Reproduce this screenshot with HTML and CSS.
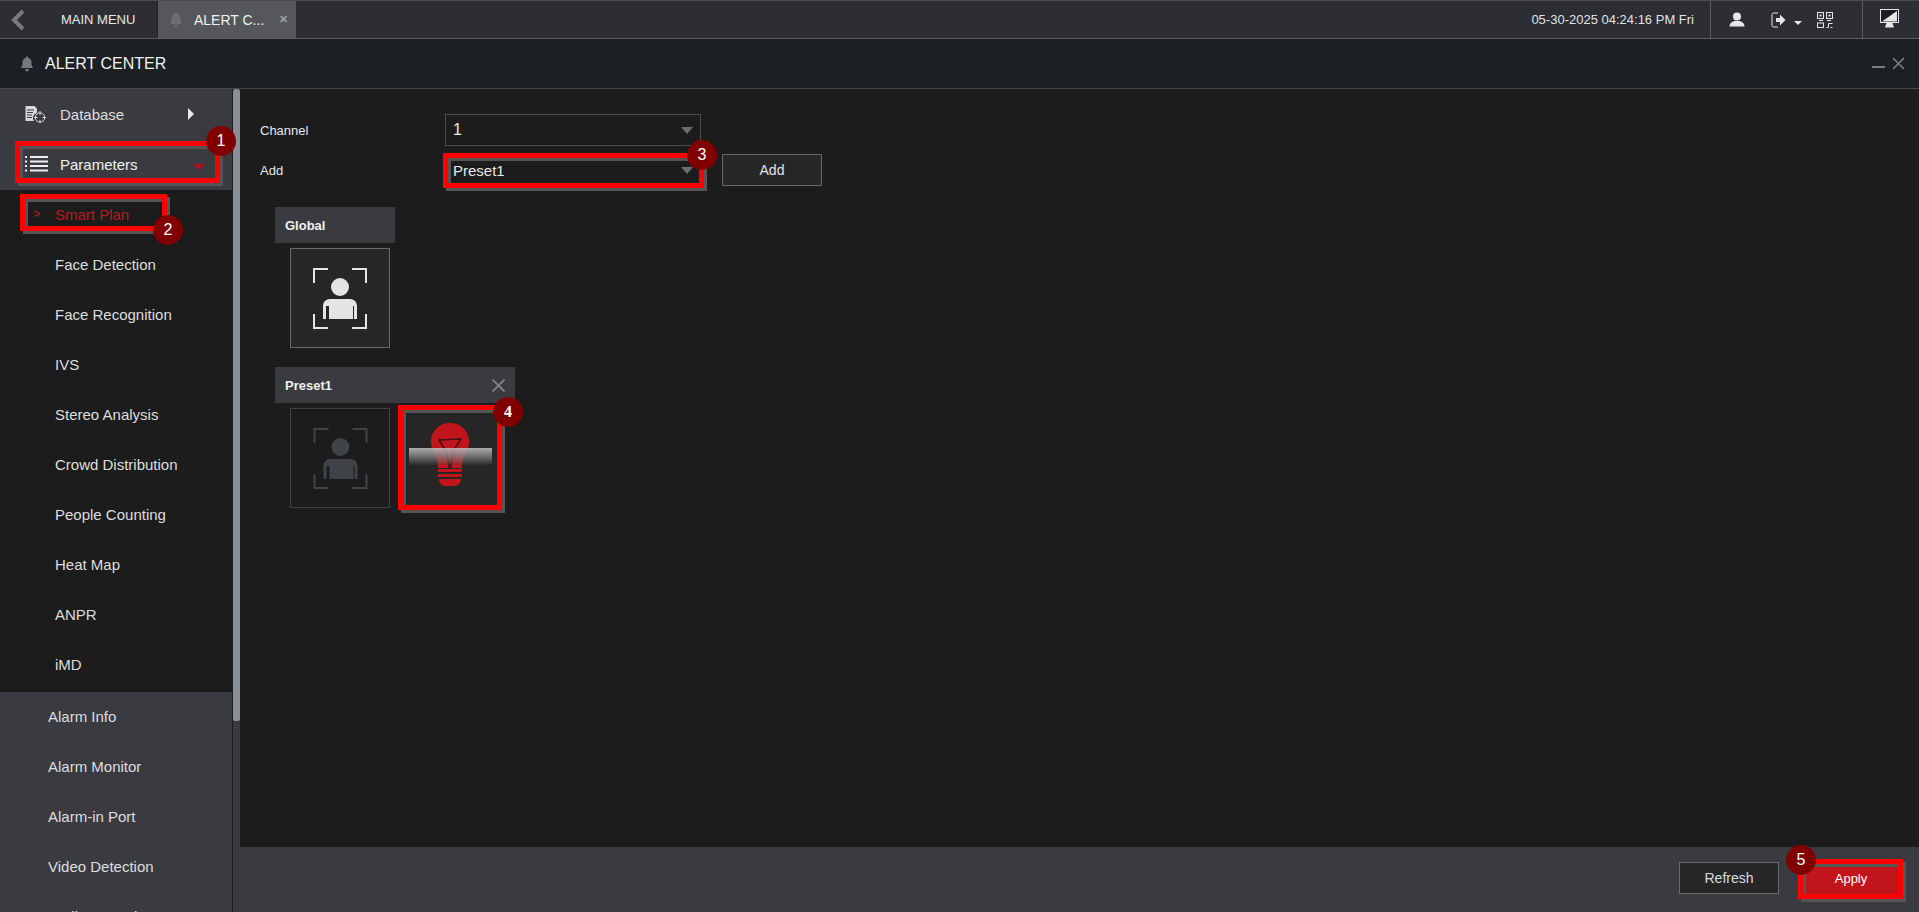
FILE: index.html
```html
<!DOCTYPE html>
<html lang="en">
<head>
<meta charset="utf-8">
<title>Alert Center</title>
<link rel="stylesheet" href="styles.css">
</head>
<body>
<div class="app">
  <header class="topbar">
    <div class="back"><svg width="16" height="24" viewBox="0 0 16 24"><path d="M13 3 L4 12 L13 21" fill="none" stroke="#77797d" stroke-width="4"/></svg></div>
    <div class="tab tab-main">MAIN MENU</div>
    <div class="tab tab-active">
      <svg class="bell-small" width="14" height="16" viewBox="0 0 14 16"><path d="M7 0.5c.8 0 1.2.5 1.2 1.2C10.500 2.300 11.500 4 11.500 6.500c0 2.500.5 4 1.700 5.500H.8C2 10.500 2.500 9 2.500 6.500 2.500 4 3.500 2.300 5.800 1.700 5.800 1 6.200.5 7 .5zM5 13h4c0 1.500-.8 2.500-2 2.500S5 14.500 5 13z" fill="#6b6d71"/></svg>
      <span class="tab-label">ALERT C...</span>
      <span class="tab-close">✕</span>
    </div>
    <div class="spring"></div>
    <div class="clock">05-30-2025 04:24:16 PM Fri</div>
    <div class="tool-group">
      <svg width="16" height="15" viewBox="0 0 16 15"><circle cx="8" cy="4.500" r="4" fill="#e6e6e6"/><path d="M0.500 14.500c0-3.500 3-5 5-5.500h5c2 .5 5 2 5 5.500z" fill="#e6e6e6"/></svg>
      <span class="logout">
        <svg width="15" height="16" viewBox="0 0 15 16"><path d="M7 1H2.500A1.500 1.500 0 0 0 1 2.500v11A1.500 1.500 0 0 0 2.500 15H7" fill="none" stroke="#e6e6e6" stroke-width="1"/><path d="M5 6h4V2.500L14.500 8 9 13.500V10H5z" fill="#e6e6e6"/></svg>
        <i class="caret-white"></i>
      </span>
      <svg width="16" height="16" viewBox="0 0 16 16"><g fill="none" stroke="#e6e6e6"><rect x=".5" y=".5" width="6" height="6"/><rect x="9.500" y=".5" width="6" height="6"/><rect x=".5" y="11" width="6" height="4.500"/><path d="M9.500 15.500h2v-4h4M13.500 15.500h2"/></g><rect x="2.500" y="2.500" width="2" height="2" fill="#e6e6e6"/><rect x="11.500" y="2.500" width="2" height="2" fill="#e6e6e6"/><path d="M2 8.500h4M10 8.500h4" stroke="#e6e6e6" fill="none"/></svg>
    </div>
    <div class="tool-end">
      <svg width="19" height="19" viewBox="0 0 19 19"><rect x=".5" y=".5" width="18" height="13" fill="#1c1e22" stroke="#e6e6e6"/><path d="M2 12.500 17 2v10.500z" fill="#e6e6e6"/><path d="M6.500 14h6l1.500 4.500H5z" fill="#e6e6e6"/></svg>
    </div>
  </header>

  <div class="titlebar">
    <svg class="bell" width="14" height="16" viewBox="0 0 14 16"><path d="M7 0.500c.8 0 1.200.5 1.200 1.200C10.500 2.300 11.500 4 11.500 6.500c0 2.500.5 4 1.700 5.500H.8C2 10.500 2.500 9 2.500 6.500 2.500 4 3.500 2.300 5.800 1.700 5.800 1 6.200.5 7 .5zM5 13h4c0 1.500-.8 2.500-2 2.500S5 14.500 5 13z" fill="#77797d"/></svg>
    <span class="title-text">ALERT CENTER</span>
    <div class="spring"></div>
    <i class="win-min"></i>
    <svg width="13" height="13" viewBox="0 0 13 13"><path d="M1 1l11 11M12 1 1 12" stroke="#7c7e82" stroke-width="1.600" fill="none"/></svg>
  </div>

  <div class="workspace">
    <aside class="sidebar">
      <nav class="menu">
        <div class="menu-head">
          <svg class="menu-icon" width="22" height="18" viewBox="0 0 22 18"><path d="M1.500 1h9l2.500 2.500V8a5 5 0 0 0-3 8H1.500z" fill="#d8d8d8"/><path d="M3 5h7M3 7.500h6M3 10h5M3 12.500h5" stroke="#3a3b40" stroke-width="1"/><circle cx="16" cy="12.500" r="4.700" fill="none" stroke="#d8d8d8"/><path d="M16 6v4M16 15v3M10 12.500h3.500M18.500 12.500H22" stroke="#d8d8d8"/></svg>
          <span class="menu-label">Database</span>
          <i class="arrow-right"></i>
        </div>
        <div class="menu-head menu-open">
          <svg class="menu-icon" width="24" height="18" viewBox="0 0 24 18"><path d="M1 2h2M1 6.500h2M1 11h2M1 15.500h2" stroke="#eee" stroke-width="2" stroke-dasharray="2 0"/><path d="M6 2h18M6 6.500h18M6 11h18M6 15.500h18" stroke="#eee" stroke-width="2"/></svg>
          <span class="menu-label">Parameters</span>
          <i class="arrow-down-red"></i>
        </div>
        <ul class="submenu">
          <li class="sub-active"><span class="chev">&gt;</span>Smart Plan</li>
          <li>Face Detection</li>
          <li>Face Recognition</li>
          <li>IVS</li>
          <li>Stereo Analysis</li>
          <li>Crowd Distribution</li>
          <li>People Counting</li>
          <li>Heat Map</li>
          <li>ANPR</li>
          <li>iMD</li>
        </ul>
        <ul class="topmenu">
          <li>Alarm Info</li>
          <li>Alarm Monitor</li>
          <li>Alarm-in Port</li>
          <li>Video Detection</li>
          <li>Audio Detection</li>
        </ul>
      </nav>
    </aside>
    <div class="scrolltrack"><div class="scrollthumb"></div></div>

    <main class="main">
      <div class="content">
        <div class="form-row row-channel">
          <label class="form-label">Channel</label>
          <div class="select"><span>1</span><i class="caret-grey"></i></div>
        </div>
        <div class="form-row row-add">
          <label class="form-label">Add</label>
          <div class="select select-plain"><span>Preset1</span><i class="caret-grey"></i></div>
          <button class="btn btn-add">Add</button>
        </div>

        <section class="group group-global">
          <div class="group-head">Global</div>
          <div class="cards">
            <div class="card card-on">
              <svg width="54" height="61" viewBox="0 0 54 61"><use href="#face"/></svg>
            </div>
          </div>
        </section>

        <section class="group group-preset">
          <div class="group-head head-wide">Preset1
            <svg width="13" height="13" viewBox="0 0 13 13"><path d="M.5.5l12 12M12.500.5l-12 12" stroke="#85878b" stroke-width="1.600" fill="none"/></svg>
          </div>
          <div class="cards">
            <div class="card card-off">
              <svg class="face-dim" width="61" height="61" viewBox="0 0 54 61"><use href="#face"/></svg>
            </div>
            <div class="card card-bulb">
              <svg width="40" height="64" viewBox="0 0 40 64"><path d="M20 0C9 0 1 8 1 19c0 9 6 13 7 23v3h24v-3c1-10 7-14 7-23C39 8 31 0 20 0z" fill="#c2151b"/><path d="M9 17l22-1-8 12-3 22-3-20z" fill="none" stroke="#3a1114" stroke-width="1.500"/><path d="M8 46h24v3H8zM8 51h24v3H8zM9 56h22c0 4-3 7-6 7h-10c-3 0-6-3-6-7z" fill="#c2151b"/></svg>
              <div class="flare"></div>
            </div>
          </div>
        </section>
      </div>
      <footer class="footer">
        <button class="btn btn-refresh">Refresh</button>
        <button class="btn btn-apply">Apply</button>
      </footer>
    </main>
  </div>

  <div class="mark mark-1"></div>
  <div class="mark mark-2"></div>
  <div class="mark mark-3"></div>
  <div class="mark mark-4"></div>
  <div class="mark mark-5"></div>
  <div class="pin pin-1">1</div>
  <div class="pin pin-2">2</div>
  <div class="pin pin-3">3</div>
  <div class="pin pin-4">4</div>
  <div class="pin pin-5">5</div>
</div>

<svg class="defs" width="0" height="0">
  <defs>
    <g id="face">
      <path d="M1 15V1h14M39 1h14v14M1 46v14h14M53 46v14H39" fill="none" stroke="currentColor" stroke-width="2"/>
      <circle cx="27" cy="19" r="9" fill="currentColor"/>
      <path d="M10 51V38c0-4 3-7 7-7h20c4 0 7 3 7 7v13h-3V38h-1v13H16V38h-3v13z" fill="currentColor"/>
    </g>
  </defs>
</svg>
</body>
</html>
```

FILE: styles.css
```css
* { box-sizing: border-box; }
html, body { margin: 0; padding: 0; height: 100%; overflow: hidden; background: #1c1c1c; }
body { font-family: "Liberation Sans", Arial, sans-serif; color: #e4e4e4; }
ul { list-style: none; margin: 0; padding: 0; }
i { display: block; }
.app { position: relative; width: 1919px; height: 912px; overflow: hidden; display: flex; flex-direction: column; }
.spring { flex: 1; }
.defs { position: absolute; }

/* top bar */
.topbar { height: 39px; flex: none; display: flex; align-items: stretch; background: #2c2e33; border-top: 1px solid #4a4c50; border-bottom: 1px solid #5a5c60; font-size: 14px; }
.back { width: 33px; display: flex; align-items: center; justify-content: flex-end; padding-right: 7px; }
.tab { display: flex; align-items: center; height: 37px; }
.tab-main { width: 125px; padding-left: 28px; color: #e8e8e8; font-size: 13px; background: #2c2e33; border-right: 1px solid #222; }
.tab-active { width: 138px; background: #55575b; padding-left: 11px; }
.tab-label { margin-left: 11px; color: #f0f0f0; width: 85px; font-size: 14px; }
.tab-close { color: #a0a2a6; font-size: 11px; font-weight: bold; }
.clock { font-size: 13px; color: #dfe3e8; padding-right: 16px; line-height: 38px; }
.tool-group { width: 153px; display: flex; align-items: center; gap: 26px; padding-left: 18px; border-left: 1px solid #5a5c60; border-right: 1px solid #5a5c60; }
.logout { display: flex; align-items: center; gap: 8px; margin-right: -11px; margin-left: 0; }
.caret-white { width: 0; height: 0; border-left: 4px solid transparent; border-right: 4px solid transparent; border-top: 4px solid #e6e6e6; margin-top: 7px; }
.tool-end { flex: 1; display: flex; align-items: center; padding-left: 17px; padding-bottom: 2px; max-width: 56px; }

/* title bar */
.titlebar { height: 50px; flex: none; display: flex; align-items: center; padding: 0 14px 0 20px; background: #1c1f23; border-bottom: 1px solid #44464a; }
.title-text { margin-left: 11px; font-size: 16px; color: #f2f2f2; }
.win-min { width: 13px; height: 2px; background: #7c7e82; margin: 6px 7px 0 0; }

/* workspace */
.workspace { flex: 1; display: flex; min-height: 0; }
.sidebar { width: 233px; flex: none; overflow: hidden; background: #3a3b41; border-right: 1px solid #1c1c1c; }
.menu-head { height: 50px; display: flex; align-items: center; position: relative; background: #3a3b41; }
.menu-open { height: 51px; }
.menu-icon { position: absolute; left: 24px; top: 16px; }
.menu-label { margin-left: 60px; font-size: 15px; color: #dedede; }
.menu-open .menu-label { color: #f0f0f0; }
.arrow-right { margin-left: auto; margin-right: 38px; width: 0; height: 0; border-top: 6px solid transparent; border-bottom: 6px solid transparent; border-left: 6px solid #e8e8e8; }
.arrow-down-red { margin-left: auto; margin-right: 27px; margin-top: 4px; width: 0; height: 0; border-left: 6px solid transparent; border-right: 6px solid transparent; border-top: 6px solid #b11116; }
.submenu { background: #1c1c1c; padding-bottom: 2px; }
.submenu li { height: 50px; line-height: 50px; padding-left: 55px; font-size: 15px; color: #dedede; position: relative; }
.sub-active { color: #b81a1f !important; }
.chev { position: absolute; left: 33px; top: -1px; font-size: 13px; color: #c21a20; }
.topmenu li { height: 50px; line-height: 50px; padding-left: 48px; font-size: 15px; color: #dedede; }
.scrolltrack { width: 7px; flex: none; background: #3a3b41; }
.scrollthumb { height: 632px; margin-top: 0; background: #8a8e95; border-radius: 3px 3px 2px 2px; }

/* main */
.main { flex: 1; display: flex; flex-direction: column; min-width: 0; }
.content { flex: 1; background: #1c1c1c; padding: 25px 0 0 20px; min-height: 0; }
.form-row { display: flex; align-items: center; height: 32px; }
.row-add { margin-top: 8px; }
.form-label { width: 185px; font-size: 13px; color: #e4e8ec; }
.select { width: 256px; height: 32px; display: flex; align-items: center; justify-content: space-between; padding: 0 7px; border: 1px solid #4a4d55; font-size: 16px; color: #e8e8e8; }
.select-plain { border-color: #1c1c1c; font-size: 15px; }
.caret-grey { width: 0; height: 0; border-left: 6px solid transparent; border-right: 6px solid transparent; border-top: 7px solid #6b6d71; }
.btn { font-family: inherit; font-size: 14px; cursor: pointer; }
.btn-add { width: 100px; height: 32px; margin-left: 21px; background: #262626; border: 1px solid #6a6a6a; color: #e4e4e4; }

.group { margin-left: 15px; }
.group-global { margin-top: 21px; }
.group-preset { margin-top: 19px; }
.group-head { height: 36px; width: 120px; display: flex; align-items: center; justify-content: space-between; padding: 0 10px; background: #3a3b41; font-size: 13px; font-weight: bold; color: #f0f0f0; }
.head-wide { width: 240px; }
.cards { display: flex; gap: 10px; margin-top: 5px; margin-left: 15px; }
.card { width: 100px; height: 100px; display: flex; align-items: center; justify-content: center; position: relative; }
.card-on { background: #262626; border: 1px solid #6a6a6a; color: #e4e4e4; }
.card-off { background: #1c1c1c; border: 1px solid #3e3e3e; color: #3f4247; }
.card-off svg { width: 61px; }
.card-bulb { background: #262626; padding-bottom: 6px; overflow: visible; }
.flare { position: absolute; left: 9px; top: 40px; width: 83px; height: 17px; background: linear-gradient(#c4c4c4, #8a8a8a 40%, rgba(60,60,60,.3) 100%); opacity: .85; }

/* footer */
.footer { height: 65px; flex: none; display: flex; justify-content: flex-end; align-items: flex-start; gap: 24px; padding: 15px 20px 0 0; background: #3a3b41; }
.btn-refresh { width: 100px; height: 32px; background: #262626; border: 1px solid #6a6a6a; color: #d8dce0; }
.btn-apply { width: 96px; height: 32px; background: #c2151b; border: 0; color: #fff; margin-right: 0; font-size: 13px; }

/* annotations */
.mark { position: absolute; border: 5px solid #ff0000; box-shadow: 3px 3px 0 #555, inset 3px 3px 0 #555; }
.mark-1 { left: 15px; top: 141px; width: 205px; height: 42px; }
.mark-2 { left: 20px; top: 194px; width: 147px; height: 37px; }
.mark-3 { left: 443px; top: 153px; width: 261px; height: 35px; }
.mark-4 { left: 398px; top: 405px; width: 104px; height: 105px; }
.mark-5 { left: 1798px; top: 859px; width: 105px; height: 40px; }
.pin { position: absolute; width: 30px; height: 30px; border-radius: 50%; background: #800000; color: #fff; font-size: 16px; display: flex; align-items: center; justify-content: center; }
.pin-1 { left: 206px; top: 126px; }
.pin-2 { left: 153px; top: 215px; }
.pin-3 { left: 687px; top: 140px; }
.pin-4 { left: 493px; top: 397px; font-weight: bold; font-family: "Liberation Serif", serif; }
.pin-5 { left: 1786px; top: 845px; }
```
